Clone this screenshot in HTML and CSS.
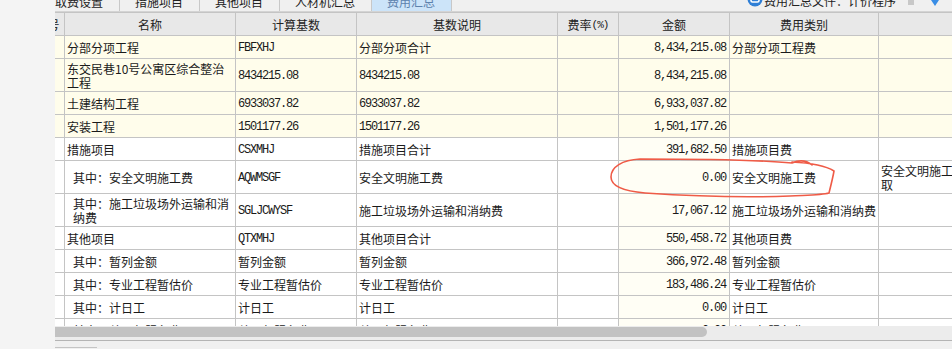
FILE: index.html
```html
<!DOCTYPE html>
<html lang="zh-CN">
<head>
<meta charset="utf-8">
<title>费用汇总</title>
<link rel="stylesheet" href="styles.css">
</head>
<body>
<div class="app">
  <aside class="side"></aside>
  <main class="main">
    <div class="tabbar">
      <div class="tabs">
        <span class="tab"><span class="tt">取费设置</span></span>
        <span class="tab"><span class="tt">措施项目</span></span>
        <span class="tab"><span class="tt">其他项目</span></span>
        <span class="tab"><span class="tt">人材机汇总</span></span>
        <span class="tab active"><span class="tt">费用汇总</span></span>
      </div>
      <div class="file">
        <svg class="ficon" width="16" height="16" viewBox="0 0 16 16"><circle cx="8" cy="8" r="7.5" fill="#2f7fd6"/><rect x="4" y="4" width="8" height="7" rx="1.5" fill="none" stroke="#fff" stroke-width="1.6"/></svg>
        <span class="ftxt">费用汇总文件：计价程序</span>
        <span class="sq"></span>
        <svg class="farrow" width="10" height="10" viewBox="0 0 10 10"><path d="M1 0 L9 0 L5 6 Z" fill="#3a8ee6"/></svg>
      </div>
    </div>
    <div class="viewport">
      <div class="grid">
        <div class="row head">
          <div class="c">序号</div><div class="c">名称</div><div class="c">计算基数</div><div class="c">基数说明</div><div class="c">费率<span class="pct">(%)</span></div><div class="c">金额</div><div class="c">费用类别</div><div class="c"></div>
        </div>
        <div class="row hl">
          <div class="c"></div><div class="c">分部分项工程</div><div class="c mono">FBFXHJ</div><div class="c">分部分项合计</div><div class="c"></div><div class="c amt mono">8,434,215.08</div><div class="c">分部分项工程费</div><div class="c"></div>
        </div>
        <div class="row hl tall">
          <div class="c"></div><div class="c"><span>东交民巷10号公寓区综合整治工程</span></div><div class="c mono">8434215.08</div><div class="c mono">8434215.08</div><div class="c"></div><div class="c amt mono">8,434,215.08</div><div class="c"></div><div class="c"></div>
        </div>
        <div class="row hl">
          <div class="c"></div><div class="c">土建结构工程</div><div class="c mono">6933037.82</div><div class="c mono">6933037.82</div><div class="c"></div><div class="c amt mono">6,933,037.82</div><div class="c"></div><div class="c"></div>
        </div>
        <div class="row hl">
          <div class="c"></div><div class="c">安装工程</div><div class="c mono">1501177.26</div><div class="c mono">1501177.26</div><div class="c"></div><div class="c amt mono">1,501,177.26</div><div class="c"></div><div class="c"></div>
        </div>
        <div class="row">
          <div class="c"></div><div class="c">措施项目</div><div class="c mono">CSXMHJ</div><div class="c">措施项目合计</div><div class="c"></div><div class="c amt mono">391,682.50</div><div class="c">措施项目费</div><div class="c"></div>
        </div>
        <div class="row tall">
          <div class="c"></div><div class="c sub">其中：安全文明施工费</div><div class="c mono">AQWMSGF</div><div class="c">安全文明施工费</div><div class="c"></div><div class="c amt mono">0.00</div><div class="c">安全文明施工费</div><div class="c"><span>安全文明施工取</span></div>
        </div>
        <div class="row tall">
          <div class="c"></div><div class="c sub"><span>其中：施工垃圾场外运输和消纳费</span></div><div class="c mono">SGLJCWYSF</div><div class="c">施工垃圾场外运输和消纳费</div><div class="c"></div><div class="c amt mono">17,067.12</div><div class="c tight">施工垃圾场外运输和消纳费</div><div class="c"></div>
        </div>
        <div class="row">
          <div class="c"></div><div class="c">其他项目</div><div class="c mono">QTXMHJ</div><div class="c">其他项目合计</div><div class="c"></div><div class="c amt mono">550,458.72</div><div class="c">其他项目费</div><div class="c"></div>
        </div>
        <div class="row">
          <div class="c"></div><div class="c sub">其中：暂列金额</div><div class="c">暂列金额</div><div class="c">暂列金额</div><div class="c"></div><div class="c amt mono">366,972.48</div><div class="c">暂列金额</div><div class="c"></div>
        </div>
        <div class="row">
          <div class="c"></div><div class="c sub">其中：专业工程暂估价</div><div class="c">专业工程暂估价</div><div class="c">专业工程暂估价</div><div class="c"></div><div class="c amt mono">183,486.24</div><div class="c">专业工程暂估价</div><div class="c"></div>
        </div>
        <div class="row">
          <div class="c"></div><div class="c sub">其中：计日工</div><div class="c">计日工</div><div class="c">计日工</div><div class="c"></div><div class="c amt mono">0.00</div><div class="c">计日工</div><div class="c"></div>
        </div>
        <div class="row">
          <div class="c"></div><div class="c sub">其中：总承包服务费</div><div class="c">总承包服务费</div><div class="c">总承包服务费</div><div class="c"></div><div class="c amt mono">0.00</div><div class="c">总承包服务费</div><div class="c"></div>
        </div>
      </div>
    </div>
    <div class="hscroll"><div class="thumb"></div></div>
    <div class="footer"><span class="ftab"></span></div>
  </main>
  <svg class="mark" width="952" height="349" viewBox="0 0 952 349">
    <path d="M812 165 C806 160 799 160 792 163 C760 160 700 159 640 159 C622 160 611 167 611 177 C611 186 622 191 645 193 C690 196 740 198 790 196 C810 195 822 195 829 193 C831 185 833 177 834 171 C826 166 812 163 792 162" fill="none" stroke="#ef5b47" stroke-width="1.6" stroke-linecap="round" stroke-linejoin="round"/>
  </svg>
</div>
</body>
</html>
```
FILE: styles.css
```css
* { box-sizing: border-box; }
html, body { margin: 0; padding: 0; }
body {
  width: 952px;
  height: 349px;
  overflow: hidden;
  background: #f0f0f0;
  font-family: "Noto Sans CJK SC", "Noto Sans", sans-serif;
  font-size: 12px;
  color: #1a1a1a;
}
.app { display: flex; height: 349px; position: relative; }
.side { width: 55px; flex: none; background: #f4f4f4; }
.main { flex: 1; min-width: 0; display: flex; flex-direction: column; }

.tabbar {
  height: 12px;
  flex: none;
  display: flex;
  overflow: hidden;
  background: #f0f0f0;
  border-bottom: 1px solid #d4d4d4;
}
.tabs { display: flex; margin-left: -15px; }
.tab {
  height: 12px;
  padding: 0 16px 0 15px;
  border-right: 1px solid #c8c8c8;
  overflow: hidden;
  color: #222;
}
.tt { display: block; line-height: 12px; margin-top: -4px; white-space: nowrap; }
.tab.active { background: #cce4f9; color: #5d82ad; }

.file { margin-left: auto; display: flex; align-items: flex-start; padding-right: 12px; }
.ficon { margin-top: -9px; margin-right: 1px; }
.ftxt { display: block; line-height: 12px; margin-top: -5px; white-space: nowrap; color: #222; }
.sq { width: 6px; height: 5px; background: #c8c8c8; margin-left: 12px; }
.farrow { margin-left: 16px; margin-right: 0; }

.viewport { height: 314px; flex: none; overflow: hidden; background: #fff; }
.grid { margin-left: -25px; width: max-content; }
.row {
  display: grid;
  grid-template-columns: 34px 171px 121px 201px 61px 111px 149px 85px;
  height: 23px;
  border-top: 1px solid #c4c4c4;
  background: #fff;
}
.row.tall { height: 33px; }
.row.hl { background: #fffdeb; }
.row.head { background: #e8e8e8; color: #222; }
.c {
  border-left: 1px solid #c4c4c4;
  padding: 1px 2px 0 2px;
  display: flex;
  align-items: center;
  overflow: hidden;
  line-height: 14px;
  white-space: nowrap;
}
.c > span { white-space: normal; }
.head .c { justify-content: center; background: #e8e8e8; }
.pct { font-family: "Liberation Mono", monospace; font-size: 11px; letter-spacing: -1px; }
.sub { padding-left: 8px; }
.tight { padding-right: 0; }
.amt { justify-content: flex-end; padding-right: 3px; background: #fffef5; }
.row.hl .amt { background: #fffdeb; }
.row.head .amt { background: #e8e8e8; }
.mono { font-family: "Liberation Mono", monospace; font-size: 12px; letter-spacing: -1.2px; }

.hscroll {
  height: 15px;
  flex: none;
  background: #ececec;
  padding-top: 1px;
  border-bottom: 1px solid #b4b4b4;
}
.thumb { width: 652px; height: 10px; background: #c2c2c2; border-radius: 0 5px 5px 0; }
.footer { height: 8px; flex: none; background: #f0f0f0; padding-top: 6px; }
.ftab { display: block; width: 42px; border-top: 1px solid #c4c4c4; }

.mark { position: absolute; left: 0; top: 0; pointer-events: none; }
```
